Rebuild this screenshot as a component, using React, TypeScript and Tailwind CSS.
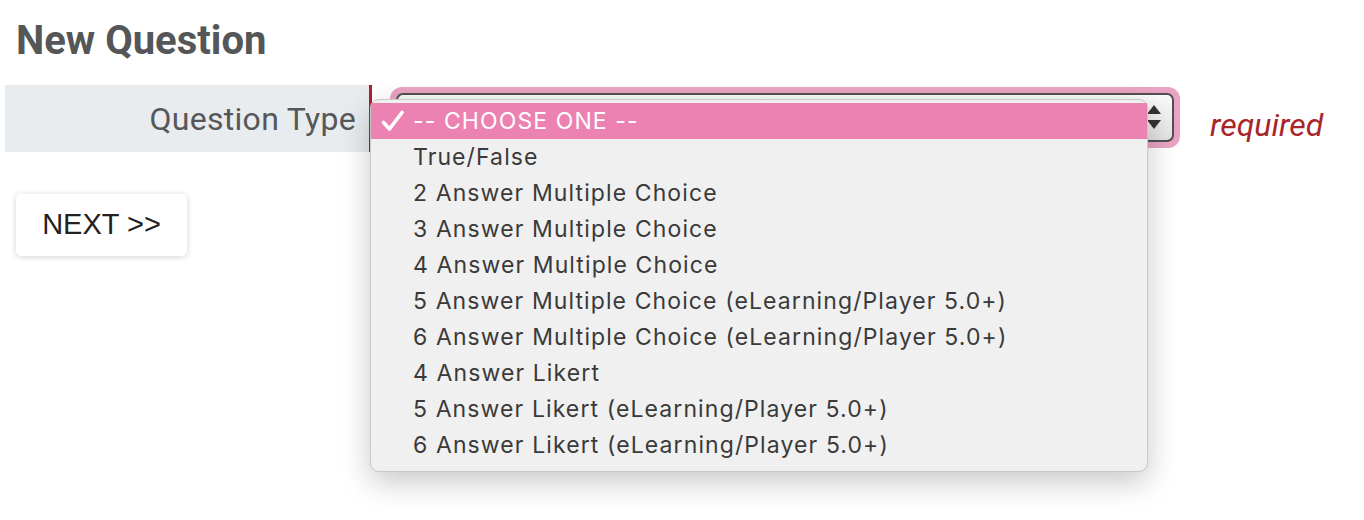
import React from "react";

const items = [
  "True/False",
  "2 Answer Multiple Choice",
  "3 Answer Multiple Choice",
  "4 Answer Multiple Choice",
  "5 Answer Multiple Choice (eLearning/Player 5.0+)",
  "6 Answer Multiple Choice (eLearning/Player 5.0+)",
  "4 Answer Likert",
  "5 Answer Likert (eLearning/Player 5.0+)",
  "6 Answer Likert (eLearning/Player 5.0+)",
];

export default function App() {
  return (
    <div className="relative w-[1364px] h-[520px] bg-white overflow-hidden" style={{ fontFamily: "Roboto, sans-serif" }}>
      <div className="pt-[17px] pl-[16px]">
        <h1 className="text-[40px] leading-[48px] font-bold text-[#545657]">New Question</h1>
      </div>
      <div className="mt-[20px] ml-[5px] flex items-stretch h-[67px]">
        <div className="w-[364px] bg-[#e9ecef] flex items-center justify-end pr-[13px]">
          <span className="text-[32px] tracking-[0.3px] text-[#555759]">Question Type</span>
        </div>
        <div className="w-[3px] bg-[#a8262a]" />
        <div className="flex items-center pl-[18px]">
          <div className="w-[790px] h-[61px] rounded-[12px] bg-[#eaa3c4] p-[6px] mt-[-3px]">
            <div className="w-full h-full rounded-[7px] border-2 border-[#505050] bg-gradient-to-b from-[#fafafa] to-[#e2e2e2] flex items-center justify-end pr-[10px]">
              <svg width="16" height="30" viewBox="0 0 16 30">
                <path d="M1 12 L8 3 L15 12 Z" fill="#333" />
                <path d="M1 18 L8 27 L15 18 Z" fill="#333" />
              </svg>
            </div>
          </div>
        </div>
        <div className="flex items-center pl-[30px] pt-[12px]">
          <span className="text-[32px] italic text-[#a8262a]">required</span>
        </div>
      </div>
      <div className="mt-[42px] ml-[16px]">
        <button className="w-[171px] h-[62px] bg-white rounded-[5px] shadow-[0_1px_6px_rgba(0,0,0,0.18)] text-[29px] text-[#222]" style={{ fontFamily: '"Liberation Sans", Arial, sans-serif' }}>
          NEXT &gt;&gt;
        </button>
      </div>

      <div
        className="absolute left-[370px] top-[99px] w-[778px] h-[373px] bg-[#f0f0f0] rounded-[9px] border border-[#c8c8c8] shadow-[0_10px_30px_rgba(0,0,0,0.22)] pt-[3px]"
        style={{ fontFamily: "Inter, sans-serif" }}
      >
        <div className="h-[36px] bg-[#ec82b2] flex items-center text-white text-[23px] tracking-[1.1px]">
          <div className="w-[42px] flex justify-center pl-[2px]">
            <svg width="24" height="22" viewBox="0 0 24 22">
              <path d="M2.5 12.5 L8.5 19 L21 2.5" stroke="white" strokeWidth="3.6" fill="none" strokeLinecap="round" strokeLinejoin="round" />
            </svg>
          </div>
          <span>-- CHOOSE ONE --</span>
        </div>
        {items.map((t) => (
          <div key={t} className="h-[36px] flex items-center pl-[42px] text-[23px] tracking-[1.1px] text-[#3a3a3a]">
            {t}
          </div>
        ))}
      </div>
    </div>
  );
}
